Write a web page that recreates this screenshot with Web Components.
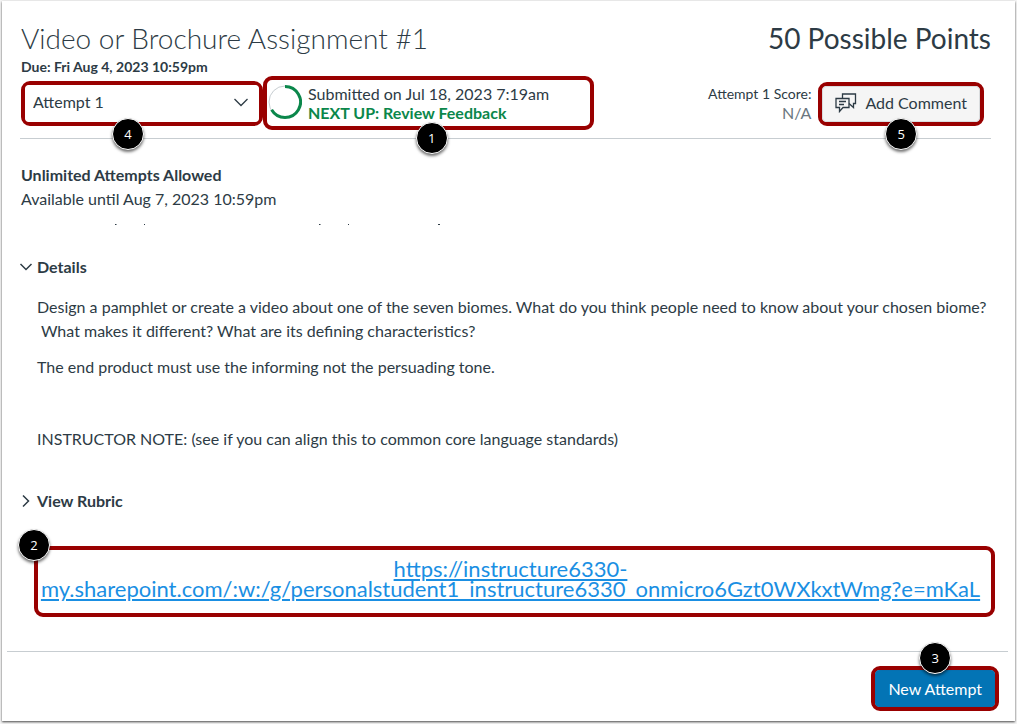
<!DOCTYPE html>
<html lang="en">
<head>
<meta charset="utf-8">
<meta name="viewport" content="width=device-width, initial-scale=1">
<title>Video or Brochure Assignment #1</title>
<style>
    body{
        margin: 0;
        background: #f4f4f4;
        color: #2d3b45;
        font-family: Lato, "Liberation Sans", sans-serif;
        font-size: 16px;
        line-height: 24px;
    }
</style>
</head>
<body>
<assignment-page></assignment-page>

<script>
// red outline with a numbered badge; "place" is bottom, top or corner
class CalloutBox extends HTMLElement{
    constructor(){
        super();
        this.attachShadow({ mode: "open" });
    }
    connectedCallback(){
        this.shadowRoot.innerHTML = `
        <style>
        :host{
            display: block;
            position: relative;
            box-sizing: border-box;
            border: 4px solid #990000;
            border-radius: 9px;
        }
        #badge{
            position: absolute;
            left: var(--badge-x, 50%);
            bottom: -28px;
            z-index: 1;
            display: grid;
            place-items: center;
            box-sizing: border-box;
            width: 32px;
            height: 32px;
            margin-left: -16px;
            border: 1px solid #ffffff;
            border-radius: 50%;
            background: #000000;
            box-shadow: 0 2px 3px rgba(0,0,0,.55);
            color: #ffffff;
            font-family: "Open Sans", sans-serif;
            font-size: 13px;
            line-height: 16px;
        }
        :host([place="top"]) #badge{
            top: -28px;
            bottom: auto;
        }
        :host([place="corner"]) #badge{
            top: -21px;
            bottom: auto;
            left: -4px;
        }
        </style>
        <slot></slot>
        <span id="badge">${this.getAttribute("number")}</span>
        `;
    }
}
window.customElements.define("callout-box", CalloutBox);

class AttemptPicker extends HTMLElement{
    constructor(){
        super();
        this.attachShadow({ mode: "open" });
    }
    connectedCallback(){
        this.shadowRoot.innerHTML = `
        <style>
        :host{
            display: grid;
            align-items: center;
            height: 37px;
        }
        select, svg{
            grid-area: 1 / 1;
        }
        select{
            appearance: none;
            box-sizing: border-box;
            width: 100%;
            height: 100%;
            padding: 0 32px 2px 8px;
            border: 0;
            border-radius: 4px;
            background: #ffffff;
            color: inherit;
            font: inherit;
        }
        svg{
            justify-self: end;
            margin-right: 10px;
            pointer-events: none;
        }
        </style>
        <select aria-label="Attempt">
            <option>Attempt 1</option>
        </select>
        <svg width="16" height="16" viewBox="0 0 16 16" fill="none" stroke="#2d3b45" stroke-width="1.3">
            <path d="M1.5 4 8 10.5l6.5-6.5"/>
        </svg>
        `;
    }
}
window.customElements.define("attempt-picker", AttemptPicker);

class SubmissionStatus extends HTMLElement{
    constructor(){
        super();
        this.attachShadow({ mode: "open" });
    }
    connectedCallback(){
        this.shadowRoot.innerHTML = `
        <style>
        :host{
            display: flex;
            align-items: center;
            gap: 6px;
            height: 46px;
            padding-left: 1px;
            line-height: 19px;
        }
        strong{
            display: block;
            color: #0b874b;
        }
        </style>
        <svg width="34" height="36" viewBox="0 0 34 36" fill="none">
            <circle cx="17" cy="17" r="16" stroke="#c7cdd1"/>
            <path d="M17 1.5A15.5 15.5 0 1 1 3.6 24.8" stroke="#0b874b" stroke-width="3"/>
        </svg>
        <div>
            <slot></slot>
            <strong><slot name="next"></slot></strong>
        </div>
        `;
    }
}
window.customElements.define("submission-status", SubmissionStatus);

class ActionButton extends HTMLElement{
    constructor(){
        super();
        this.attachShadow({ mode: "open" });
    }
    connectedCallback(){
        this.shadowRoot.innerHTML = `
        <style>
        :host{
            display: block;
        }
        button{
            display: flex;
            align-items: center;
            gap: 8px;
            box-sizing: border-box;
            height: 36px;
            padding: 0 12px 2px;
            border: 1px solid #d9dcde;
            border-radius: 4px;
            background: #f5f5f5;
            color: inherit;
            font: inherit;
            white-space: nowrap;
        }
        :host([primary]) button{
            height: 37px;
            padding: 0 12px;
            border-color: #0770b0;
            background: #0374b5;
            color: #ffffff;
        }
        </style>
        <button type="button"><slot name="icon"></slot><slot></slot></button>
        `;
    }
}
window.customElements.define("action-button", ActionButton);

class ToggleSection extends HTMLElement{
    constructor(){
        super();
        this.attachShadow({ mode: "open" });
    }
    connectedCallback(){
        this.shadowRoot.innerHTML = `
        <style>
        :host{
            display: block;
        }
        button{
            display: flex;
            align-items: center;
            gap: 4px;
            padding: 0;
            border: 0;
            background: none;
            color: inherit;
            font: inherit;
            font-weight: bold;
        }
        svg{
            transform: rotate(-90deg);
        }
        :host([open]) svg{
            transform: none;
        }
        #content{
            display: none;
            padding: 16px 0 0 18px;
        }
        :host([open]) #content{
            display: block;
        }
        </style>
        <button type="button" aria-expanded="${this.hasAttribute("open")}">
            <svg width="14" height="14" viewBox="0 0 14 14" fill="none" stroke="#2d3b45" stroke-width="1.5">
                <path d="M1.5 4 7 9.5 12.5 4"/>
            </svg>
            ${this.getAttribute("label")}
        </button>
        <div id="content"><slot></slot></div>
        `;
        this.shadowRoot.querySelector("button").addEventListener("click", (e) => {
            this.toggleAttribute("open");
            e.currentTarget.setAttribute("aria-expanded", this.hasAttribute("open"));
        });
    }
}
window.customElements.define("toggle-section", ToggleSection);

class AssignmentPage extends HTMLElement{
    constructor(){
        super();
        this.attachShadow({ mode: "open" });
    }
    connectedCallback(){
        this.shadowRoot.innerHTML = `
        <style>
        :host{
            display: block;
            box-sizing: border-box;
            margin: 1px 2px 3px;
            min-height: calc(100vh - 4px);
            background: #ffffff;
            box-shadow: 0 1px 2px rgba(0,0,0,.7);
        }
        header{
            margin: 0 24px 0 18px;
            padding: 20px 0 8px;
            border-bottom: 1px solid #c7cdd1;
        }
        .row{
            display: flex;
            align-items: center;
        }
        header > *{
            padding-left: 1px;
        }
        h1, .points{
            margin: 0;
            font-size: 28px;
            line-height: 34px;
        }
        h1{
            flex: 1;
            font-weight: 300;
        }
        .due{
            margin-top: 3px;
            font-size: 14px;
            font-weight: bold;
            line-height: 18px;
        }
        .attempt{
            flex: 0 0 242px;
            --badge-x: 44%;
        }
        .status{
            flex: 0 0 331px;
            --badge-x: 51%;
        }
        .score{
            flex: 1;
            margin-right: 7px;
            text-align: right;
            font-size: 14px;
            line-height: 19px;
        }
        .score span{
            display: block;
            color: #6b7780;
            font-size: 16px;
        }
        .comment{
            margin: 2px 7px 0 0;
        }
        main{
            padding: 24px 20px 0 19px;
        }
        .limits strong{
            display: block;
        }
        .remnant{
            display: block;
            margin: 12px 0 29px;
        }
        toggle-section{
            margin-left: -2px;
        }
        p{
            margin: 0 0 12px;
        }
        p:last-child{
            margin-bottom: 0;
        }
        .rubric{
            margin-top: 38px;
        }
        .link{
            margin: 33px 0 34px 13px;
            padding: 9px 8px 14px 0;
            text-align: center;
            font-size: 22px;
            line-height: 20px;
        }
        a{
            color: #1a8fe3;
        }
        footer{
            display: flex;
            justify-content: flex-end;
            margin: 0 7px 0 5px;
            padding: 14px 9px 10px;
            border-top: 1px solid #c7cdd1;
        }
        </style>
        <header>
            <div class="row">
                <h1>Video or Brochure Assignment #1</h1>
                <div class="points">50 Possible Points</div>
            </div>
            <div class="due">Due: Fri Aug 4, 2023 10:59pm</div>
            <div class="row">
                <callout-box class="attempt" number="4"><attempt-picker></attempt-picker></callout-box>
                <callout-box class="status" number="1">
                    <submission-status>
                        Submitted on Jul 18, 2023 7:19am
                        <span slot="next">NEXT UP: Review Feedback</span>
                    </submission-status>
                </callout-box>
                <div class="score">Attempt 1 Score:<span>N/A</span></div>
                <callout-box class="comment" number="5">
                    <action-button>
                        <svg slot="icon" width="22" height="20" viewBox="0 0 22 20" fill="none" stroke="#2d3b45" stroke-width="1.3">
                            <path d="M1 5.5H14V14.5H8L4.500 18.500V14.500H1Z"/>
                            <path d="M4 8.500H11M4 11.500H9"/>
                            <path d="M7.500 5.500V1H20.500V10.500H18.500V14.500L14 10.500"/>
                        </svg>
                        Add Comment
                    </action-button>
                </callout-box>
            </div>
        </header>
        <main>
            <div class="limits">
                <strong>Unlimited Attempts Allowed</strong>
                Available until Aug 7, 2023 10:59pm
            </div>
            <!-- tips of the clipped line under the dates -->
            <svg class="remnant" width="440" height="3" viewBox="0 0 440 3" fill="#2d3b45" aria-hidden="true">
                <path d="M94 1h2l-1 1h-1zM123 1h1v1h-1zM298 1h2l-1 1h-1zM327 1h1v1h-1zM417 1h2v1h-2z"/>
            </svg>
            <toggle-section label="Details" open>
                <p>Design a pamphlet or create a video about one of the seven biomes. What do you think people need to know about your chosen biome? &nbsp;What makes it different? What are its defining characteristics?</p>
                <p>The end product must use the informing not the persuading tone.</p>
                <p>&nbsp;</p>
                <p>INSTRUCTOR NOTE: (see if you can align this to common core language standards)</p>
            </toggle-section>
            <toggle-section class="rubric" label="View Rubric"></toggle-section>
            <callout-box class="link" number="2" place="corner">
                <a href="#">https://instructure6330-<br>my.sharepoint.com/:w:/g/personalstudent1_instructure6330_onmicro6Gzt0WXkxtWmg?e=mKaL</a>
            </callout-box>
        </main>
        <footer>
            <callout-box number="3" place="top">
                <action-button primary>New Attempt</action-button>
            </callout-box>
        </footer>
        `;
    }
}
window.customElements.define("assignment-page", AssignmentPage);
</script>
</body>
</html>
